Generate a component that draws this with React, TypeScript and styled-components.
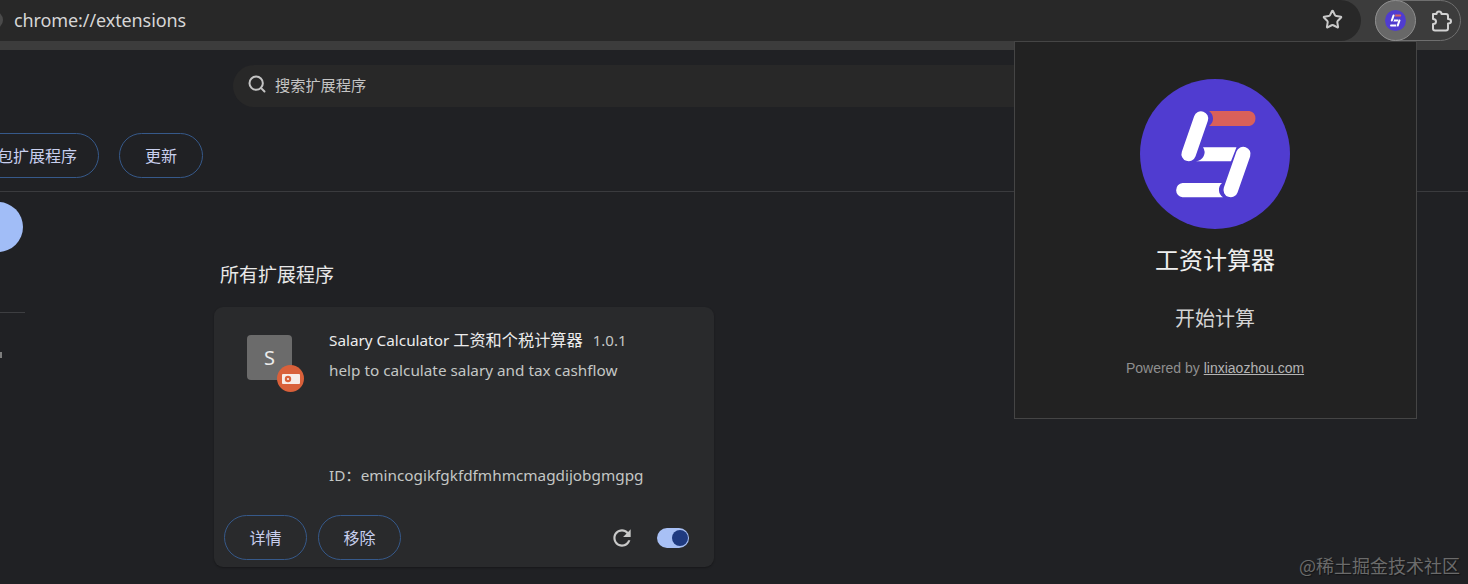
import React from 'react'
import styled, { createGlobalStyle } from 'styled-components'
import { Search, Star } from 'lucide-react'

const GlobalStyle = createGlobalStyle`
  html, body {
    margin: 0;
    height: 100%;
    overflow: hidden;
    background: #202124;
  }

  * {
    box-sizing: border-box;
  }
`

const Page = styled.div`
  position: relative;
  width: 1468px;
  height: 584px;
  overflow: hidden;
  background: #202124;
  color: #e3e3e3;
  font-family: 'Noto Sans', 'Noto Sans CJK SC', sans-serif;
`

const BrowserBar = styled.header`
  display: flex;
  align-items: stretch;
  height: 50px;
  padding-bottom: 9px;
  padding-right: 7px;
  background: #3c3c3c;
`

const Omnibox = styled.div`
  display: flex;
  flex: 1;
  align-items: center;
  gap: 11px;
  padding: 0 18px 2px 0;
  background: #282828;
  border-radius: 0 21px 21px 0;
`

const SiteChip = styled.span`
  width: 18px;
  height: 18px;
  margin-left: -15px;
  border-radius: 50%;
  background: #4a4a4a;
`

const Address = styled.span`
  flex: 1;
  font-size: 18px;
  letter-spacing: -0.1px;
  color: #d6d6d6;
`

const ExtensionPill = styled.div`
  display: flex;
  align-items: center;
  width: 86px;
  margin-left: 14px;
  border: 1px solid #6f6f6f;
  border-radius: 21px;
`

const ActiveSlot = styled.div`
  display: flex;
  align-items: center;
  justify-content: center;
  width: 41px;
  height: 41px;
  margin: -1px 0 -1px -1px;
  border: 1px solid #8e8e8e;
  border-radius: 50%;
  background: #686868;
`

const PuzzleSlot = styled.div`
  display: flex;
  flex: 1;
  align-items: center;
  justify-content: center;
  padding-left: 6px;
  color: #d2d2d2;
`

const SearchRow = styled.div`
  padding: 15px 0 0 233px;
`

const SearchBox = styled.div`
  display: flex;
  align-items: center;
  gap: 8px;
  width: 820px;
  height: 42px;
  padding: 0 0 4px 14px;
  border-radius: 21px;
  background: #282828;
  font-size: 15.2px;
  color: #c4c4c4;
`

const DevToolbar = styled.div`
  display: flex;
  gap: 20px;
  margin-top: 26px;
  margin-left: -41px;
  padding-bottom: 13px;
`

const Divider = styled.div`
  height: 1px;
  background: #3a3b3e;
`

const OutlineButton = styled.button<{ $pad?: number }>`
  height: 45px;
  padding: 0 ${(p) => p.$pad ?? 25}px;
  border: 1px solid #36598a;
  border-radius: 23px;
  background: transparent;
  color: #c8cfee;
  font-family: inherit;
  font-size: 16px;
  line-height: 1;
`

const Body = styled.div`
  display: flex;
`

const Sidebar = styled.aside`
  flex: none;
  width: 214px;
`

const SideDot = styled.div`
  width: 50px;
  height: 50px;
  margin: 10px 0 0 -27px;
  border-radius: 50%;
  background: #a1bdf7;
`

const SideRule = styled.div`
  width: 25px;
  height: 1px;
  margin-top: 60px;
  background: #3d3e41;
`

const SideMark = styled.div`
  width: 2px;
  height: 6px;
  margin-top: 39px;
  background: #7d7d7d;
`

const Main = styled.main`
  width: 500px;
`

const SectionTitle = styled.h2`
  margin: 69px 0 0 6px;
  font-size: 19px;
  font-weight: 400;
  line-height: 28px;
  color: #e8e8e8;
`

const Card = styled.article`
  display: flex;
  flex-direction: column;
  height: 260px;
  margin-top: 18px;
  border-radius: 9px;
  background: #292a2c;
  box-shadow: 0 1px 2px rgba(0, 0, 0, 0.3);
`

const CardTop = styled.div`
  display: flex;
  flex: 1;
  padding: 22px 0 0 33px;
`

const IconWrap = styled.div`
  position: relative;
  flex: none;
  width: 45px;
  height: 45px;
  margin-top: 6px;
`

const LetterIcon = styled.div`
  display: flex;
  align-items: center;
  justify-content: center;
  width: 45px;
  height: 45px;
  border-radius: 4px;
  background: #6b6b6b;
  font-size: 20px;
  color: #ececec;
`

const Badge = styled.div`
  position: absolute;
  right: -12px;
  bottom: -12px;
  display: flex;
  align-items: center;
  justify-content: center;
  width: 27px;
  height: 27px;
  border-radius: 50%;
  background: #d9603a;
`

const CardText = styled.div`
  display: flex;
  flex-direction: column;
  margin-left: 37px;
  font-size: 15.3px;
  line-height: 22px;
  color: #c4c7c5;
`

const NameLine = styled.div`
  display: flex;
  gap: 10px;
  color: #ececec;
`

const CjkRun = styled.span`
  font-size: 16.2px;
`

const Version = styled.span`
  font-size: 15px;
  color: #c4c7c5;
`

const Description = styled.div`
  margin-top: 8px;
`

const IdLine = styled.div`
  margin-top: 83px;
`

const CardActions = styled.div`
  display: flex;
  align-items: center;
  gap: 11px;
  padding: 0 25px 7px 10px;
`

const ReloadWrap = styled.div`
  display: flex;
  margin-left: auto;
  margin-right: 11px;
  color: #c9c9c9;
`

const Toggle = styled.div`
  display: flex;
  align-items: center;
  justify-content: flex-end;
  width: 32px;
  height: 20px;
  padding-right: 1.5px;
  border-radius: 10px;
  background: #a8c0f5;
`

const ToggleKnob = styled.span`
  width: 16px;
  height: 16px;
  border-radius: 50%;
  background: #1f3a7f;
`

const Popup = styled.section`
  position: absolute;
  top: 41px;
  left: 1014px;
  display: flex;
  flex-direction: column;
  align-items: center;
  width: 403px;
  height: 378px;
  padding: 37px 1px 0 0;
  border: 1px solid #454545;
  background: #222222;
`

const PopupTitle = styled.h1`
  margin: 14px 0 0;
  font-size: 24px;
  font-weight: 400;
  line-height: 34px;
  color: #f0f0f0;
`

const PopupAction = styled.div`
  margin-top: 28px;
  font-size: 20px;
  line-height: 28px;
  color: #d4d4d4;
`

const PoweredBy = styled.p`
  margin: 26px 0 0;
  font-family: 'Liberation Sans', Arial, sans-serif;
  font-size: 14px;
  line-height: 18px;
  color: #8f8f8f;
`

const PoweredLink = styled.a`
  color: #b4b4b4;
  text-decoration: underline;
`

const Watermark = styled.div`
  position: absolute;
  right: 8px;
  bottom: 7px;
  font-family: 'Noto Sans CJK SC', sans-serif;
  font-size: 18px;
  line-height: 24px;
  color: #6b6b6b;
  text-shadow: 1px 1px 1px rgba(0, 0, 0, 0.45);
`

function LogoMark({ size }: { size: number }) {
  return (
    <svg width={size} height={size} viewBox="0 0 150 150" aria-hidden="true">
      <circle cx="75" cy="75" r="75" fill="#503cd0" />
      <path
        d="M69 32 H109.5 A7.7 7.7 0 0 1 109.5 47 H69 A9 9 0 0 0 69 32 Z"
        fill="#d9605a"
      />
      <path d="M61 39.5 L48.7 75" stroke="#fff" strokeWidth="14.5" strokeLinecap="round" />
      <path d="M103.3 75 L90.7 111" stroke="#fff" strokeWidth="14.5" strokeLinecap="round" />
      <path d="M63 68.3 H96.5 L91 82.3 H56 A9 9 0 0 0 63 68.3 Z" fill="#fff" />
      <path
        d="M42.5 104 H82 A9 9 0 0 0 83 118.3 H42.5 A7.2 7.2 0 0 1 42.5 104 Z"
        fill="#fff"
      />
    </svg>
  )
}

function PuzzleIcon() {
  return (
    <svg width="22" height="22" viewBox="0 0 22 22" fill="none" stroke="currentColor" strokeWidth="2" strokeLinejoin="round" aria-hidden="true">
      <path d="M3 4 H6.5 C6.5 2 7.5 1.5 9 1.5 S11.5 2 11.5 4 H16 Q18 4 18 6 V9 C20 9 21 10 21 11.2 S20 13.5 18 13.5 V18.5 Q18 20.5 16 20.5 H5 Q3 20.5 3 18.5 V14 C5 14 6 13 6 11.5 S5 9 3 9 Z" />
    </svg>
  )
}

function CashIcon() {
  return (
    <svg width="18" height="12" viewBox="0 0 18 12" aria-hidden="true">
      <rect x="0" y="1" width="18" height="10" rx="1" fill="#f7ece8" />
      <circle cx="6" cy="6" r="3.2" fill="#d9603a" />
      <circle cx="6" cy="6" r="1.1" fill="#f7ece8" />
    </svg>
  )
}

function ReloadIcon() {
  return (
    <svg width="26" height="26" viewBox="0 0 24 24" fill="currentColor" aria-hidden="true">
      <path d="M17.65 6.35C16.2 4.9 14.21 4 12 4c-4.42 0-7.99 3.58-7.99 8s3.57 8 7.99 8c3.73 0 6.84-2.55 7.73-6h-2.08c-.82 2.33-3.04 4-5.65 4-3.31 0-6-2.69-6-6s2.69-6 6-6c1.66 0 3.14.69 4.22 1.78L13 11h7V4l-2.35 2.35z" />
    </svg>
  )
}

export default function App() {
  return (
    <>
      <GlobalStyle />
      <Page>
        <BrowserBar>
          <Omnibox>
            <SiteChip />
            <Address>chrome://extensions</Address>
            <Star size={21} strokeWidth={2.3} color="#c9c9c9" />
          </Omnibox>
          <ExtensionPill>
            <ActiveSlot>
              <LogoMark size={21} />
            </ActiveSlot>
            <PuzzleSlot>
              <PuzzleIcon />
            </PuzzleSlot>
          </ExtensionPill>
        </BrowserBar>

        <SearchRow>
          <SearchBox>
            <Search size={20} strokeWidth={2.4} color="#c4c4c4" />
            搜索扩展程序
          </SearchBox>
        </SearchRow>

        <DevToolbar>
          <OutlineButton $pad={21}>打包扩展程序</OutlineButton>
          <OutlineButton>更新</OutlineButton>
        </DevToolbar>
        <Divider />

        <Body>
          <Sidebar>
            <SideDot />
            <SideRule />
            <SideMark />
          </Sidebar>
          <Main>
            <SectionTitle>所有扩展程序</SectionTitle>
            <Card>
              <CardTop>
                <IconWrap>
                  <LetterIcon>S</LetterIcon>
                  <Badge>
                    <CashIcon />
                  </Badge>
                </IconWrap>
                <CardText>
                  <NameLine>
                    <span>
                      Salary Calculator <CjkRun>工资和个税计算器</CjkRun>
                    </span>
                    <Version>1.0.1</Version>
                  </NameLine>
                  <Description>help to calculate salary and tax cashflow</Description>
                  <IdLine>ID：emincogikfgkfdfmhmcmagdijobgmgpg</IdLine>
                </CardText>
              </CardTop>
              <CardActions>
                <OutlineButton $pad={24.5}>详情</OutlineButton>
                <OutlineButton $pad={24.5}>移除</OutlineButton>
                <ReloadWrap>
                  <ReloadIcon />
                </ReloadWrap>
                <Toggle>
                  <ToggleKnob />
                </Toggle>
              </CardActions>
            </Card>
          </Main>
        </Body>

        <Popup>
          <LogoMark size={150} />
          <PopupTitle>工资计算器</PopupTitle>
          <PopupAction>开始计算</PopupAction>
          <PoweredBy>
            Powered by <PoweredLink>linxiaozhou.com</PoweredLink>
          </PoweredBy>
        </Popup>

        <Watermark>@稀土掘金技术社区</Watermark>
      </Page>
    </>
  )
}
